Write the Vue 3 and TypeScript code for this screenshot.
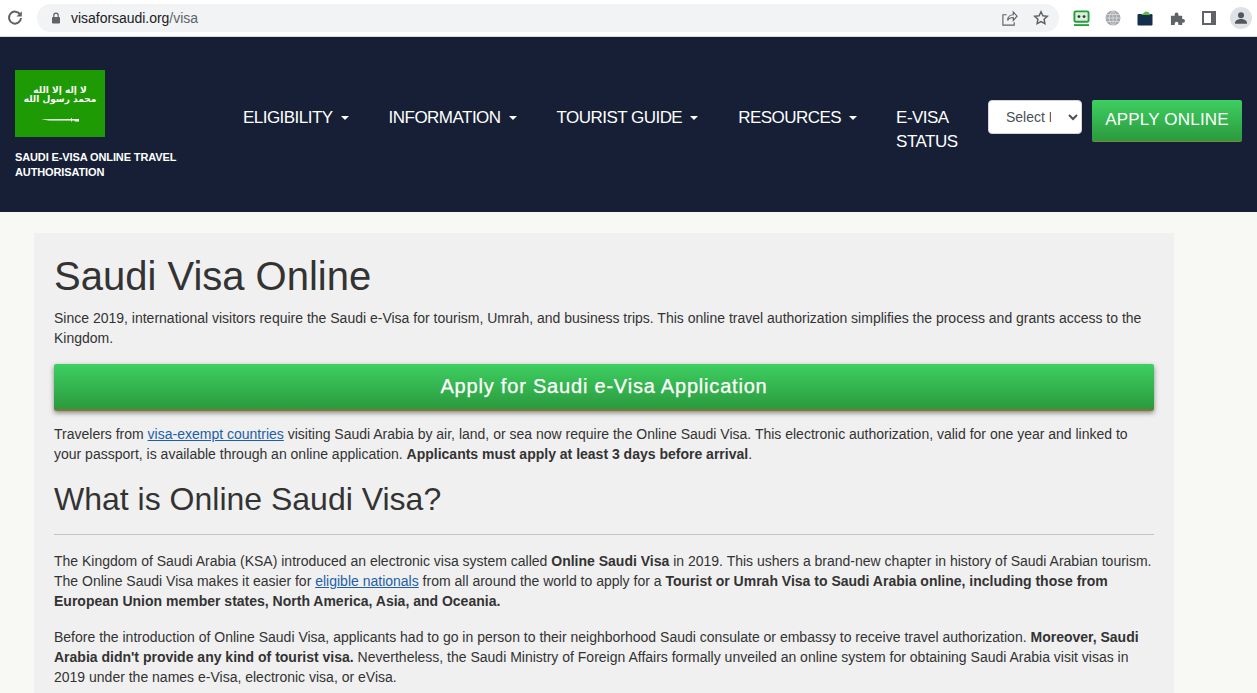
<script setup lang="ts">
const navItems: string[] = ['ELIGIBILITY', 'INFORMATION', 'TOURIST GUIDE', 'RESOURCES']
</script>

<template>
  <div class="page">
    <div class="chrome">
      <svg class="reload" viewBox="0 0 16 16" width="16" height="16">
        <path d="M13.2 4.6A6 6 0 1 0 14 8" fill="none" stroke="#5f6368" stroke-width="2" />
        <path d="M14.8 1.2v5.4H9.4z" fill="#5f6368" />
      </svg>
      <div class="omnibox">
        <svg class="lock" viewBox="0 0 10 12" width="10" height="12">
          <rect x="1" y="5" width="8" height="6.500" rx="1" fill="#5f6368" />
          <path d="M2.800 5V3.400a2.200 2.200 0 0 1 4.400 0V5" fill="none" stroke="#5f6368" stroke-width="1.200" />
        </svg>
        <span class="url">visaforsaudi.org<span class="url-path">/visa</span></span>
        <span class="omni-space"></span>
        <svg class="share" viewBox="0 0 18 18" width="17" height="17">
          <path d="M6 5H2v11h12v-3M7 11c0-4 3-6 6-6V2l4 4.500L13 11V8c-3 0-5 1-6 3z" fill="none" stroke="#5f6368" stroke-width="1.200" />
        </svg>
        <svg class="star" viewBox="0 0 16 16" width="16" height="16">
          <path d="M8 1.800l1.900 4 4.400.5-3.200 3 .8 4.400L8 11.600l-3.900 2.100.8-4.400-3.200-3 4.400-.5z" fill="none" stroke="#5f6368" stroke-width="1.500" />
        </svg>
      </div>
      <div class="extensions">
        <svg class="ext-rf" viewBox="0 0 18 18" width="17" height="17">
          <rect x="1.500" y="1.500" width="15" height="11" rx="1.500" fill="#d9efdc" stroke="#249e3b" stroke-width="2" />
          <circle cx="6.300" cy="7" r="1.500" fill="#333" />
          <circle cx="11.700" cy="7" r="1.500" fill="#333" />
          <rect x="1" y="15" width="16" height="2" fill="#249e3b" />
        </svg>
        <svg class="ext-globe" viewBox="0 0 16 16" width="16" height="16">
          <circle cx="8" cy="8" r="7.500" fill="#a4a7aa" />
          <path d="M.5 8h15M1.500 4.500h13M1.500 11.500h13M8 .5v15M8 .5c-5 4-5 11 0 15M8 .5c5 4 5 11 0 15" fill="none" stroke="#e4e5e6" stroke-width=".7" />
        </svg>
        <svg class="ext-wallet" viewBox="0 0 16 15" width="16" height="15">
          <rect x="0.500" y="3" width="15" height="11.500" rx="1" fill="#14304d" />
          <path d="M4 4L8.500 .5l3 .5 2 3z" fill="#62b84e" />
        </svg>
        <svg class="ext-puzzle" viewBox="0 0 16 16" width="15" height="15">
          <path d="M1 5h4V3.500a2 2 0 0 1 4 0V5h4v3.500h1a2 2 0 0 1 0 4h-1V15H9v-1.500a2 2 0 0 0-4 0V15H1z" fill="#5f6368" />
        </svg>
        <svg class="ext-panel" viewBox="0 0 14 14" width="14" height="14">
          <rect x="1" y="1" width="12" height="12" fill="#fff" stroke="#5f6368" stroke-width="2" />
          <rect x="9" y="1" width="4" height="12" fill="#5f6368" />
        </svg>
        <svg class="avatar" viewBox="0 0 22 22" width="22" height="22">
          <circle cx="11" cy="11" r="11" fill="#dee1e6" />
          <circle cx="11" cy="8.300" r="3" fill="#53575c" />
          <path d="M5 16c0-2.700 3.500-4 6-4s6 1.300 6 4v.8H5z" fill="#53575c" />
        </svg>
      </div>
    </div>

    <header class="site-header">
      <div class="brand">
        <div class="flag">
          <span class="shahada" lang="ar" dir="rtl">لا إله إلا الله<br />محمد رسول الله</span>
          <svg class="sword" viewBox="0 0 38 4" width="38" height="4">
            <path d="M0 1.200L30 1V.3h1V1h7v2.600h-4l-.6-1H31v1h-1V2.400L8 2.500z" fill="#fff" />
          </svg>
        </div>
        <div class="brand-name">SAUDI E-VISA ONLINE TRAVEL AUTHORISATION</div>
      </div>
      <nav class="nav">
        <a v-for="item in navItems" :key="item" class="nav-link">{{ item }}<span class="caret"></span></a>
        <a class="nav-link status">E-VISA STATUS</a>
      </nav>
      <div class="actions">
        <select class="lang" aria-label="Select language">
          <option>Select Language</option>
        </select>
        <a class="apply-top">APPLY ONLINE</a>
      </div>
    </header>

    <main class="content">
      <article class="card">
        <h1>Saudi Visa Online</h1>
        <p class="intro">Since 2019, international visitors require the Saudi e-Visa for tourism, Umrah, and business trips. This online travel authorization simplifies the process and grants access to the Kingdom.</p>
        <a class="apply-wide">Apply for Saudi e-Visa Application</a>
        <p class="after-btn">Travelers from <a class="link">visa-exempt countries</a> visiting Saudi Arabia by air, land, or sea now require the Online Saudi Visa. This electronic authorization, valid for one year and linked to your passport, is available through an online application. <b>Applicants must apply at least 3 days before arrival</b>.</p>
        <h2>What is Online Saudi Visa?</h2>
        <hr />
        <p>The Kingdom of Saudi Arabia (KSA) introduced an electronic visa system called <b>Online Saudi Visa</b> in 2019. This ushers a brand-new chapter in history of Saudi Arabian tourism. The Online Saudi Visa makes it easier for <a class="link">eligible nationals</a> from all around the world to apply for a <b>Tourist or Umrah Visa to Saudi Arabia online, including those from European Union member states, North America, Asia, and Oceania.</b></p>
        <p>Before the introduction of Online Saudi Visa, applicants had to go in person to their neighborhood Saudi consulate or embassy to receive travel authorization. <b>Moreover, Saudi Arabia didn't provide any kind of tourist visa.</b> Nevertheless, the Saudi Ministry of Foreign Affairs formally unveiled an online system for obtaining Saudi Arabia visit visas in 2019 under the names e-Visa, electronic visa, or eVisa.</p>
      </article>
    </main>
  </div>
</template>

<style>
html, body { margin: 0; height: 100%; overflow: hidden; }
</style>

<style scoped>
.page {
  position: relative;
  height: 693px;
  overflow: hidden;
  background: #f8f9f4;
  font-family: "Liberation Sans", Arial, sans-serif;
  color: #333;
}
.chrome {
  height: 36px;
  background: #fff;
  border-bottom: 1px solid #d9dadc;
  display: flex;
  align-items: center;
  padding-left: 7px;
}
.reload { flex: none; }
.omnibox {
  margin-left: 14px;
  width: 1022px;
  height: 28px;
  border-radius: 14px;
  background: #f1f3f4;
  display: flex;
  align-items: center;
  padding: 0 10px 0 14px;
  box-sizing: border-box;
}
.url { margin-left: 10px; font-size: 14px; letter-spacing: -.03px; color: #202124; }
.url-path { color: #5f6368; }
.omni-space { flex: 1; }
.star { margin-left: 15px; }
.extensions {
  display: flex;
  align-items: center;
  margin-left: 14px;
}
.ext-globe { margin-left: 15px; }
.ext-wallet { margin-left: 16px; }
.ext-puzzle { margin-left: 17px; }
.ext-panel { margin-left: 17px; }
.avatar { margin-left: 14px; }
.site-header {
  height: 175px;
  background: #161f36;
  display: flex;
  color: #fff;
}
.brand { width: 205px; padding: 33px 0 0 15px; box-sizing: border-box; flex: none; }
.flag {
  width: 90px;
  height: 67px;
  background: #1d9a04;
  display: flex;
  flex-direction: column;
  align-items: center;
}
.shahada {
  margin-top: 16px;
  height: 18px;
  line-height: 9px;
  font-family: "DejaVu Sans", sans-serif;
  font-size: 9px;
  font-weight: 700;
  white-space: nowrap;
  text-align: center;
  color: #fff;
}
.sword { margin-top: 14px; }
.brand-name {
  margin-top: 13px;
  font-size: 11px;
  letter-spacing: -.12px;
  line-height: 15px;
  font-weight: 700;
  width: 170px;
}
.nav {
  display: flex;
  align-items: flex-start;
  padding-top: 69px;
  margin-left: 38px;
  font-size: 17px;
  letter-spacing: -.53px;
}
.nav-link { line-height: 24px; margin-right: 40px; white-space: nowrap; }
.caret {
  display: inline-block;
  margin-left: 8px;
  vertical-align: 3px;
  border-top: 4px solid #fff;
  border-left: 4px solid transparent;
  border-right: 4px solid transparent;
}
.status { white-space: normal; width: 70px; margin: 0 0 0 -1px; }
.actions {
  position: absolute;
  left: 988px;
  top: 100px;
  display: flex;
  align-items: flex-start;
  gap: 10px;
}
.lang {
  width: 94px;
  height: 34px;
  background: #fff;
  border: 1px solid #ced4da;
  border-radius: 4px;
  padding: 0 14px 0 13px;
  font-family: inherit;
  font-size: 14px;
  color: #495057;
}
.apply-top {
  width: 150px;
  height: 42px;
  line-height: 39px;
  text-align: center;
  font-size: 17px;
  letter-spacing: .2px;
  color: #fff;
  border-radius: 2px;
  background: linear-gradient(#3ecf62, #2b9a3d);
  border-bottom: 1px solid #7d8a33;
  box-sizing: border-box;
}
.content { padding: 21px 0 0 34px; }
.card {
  width: 1140px;
  height: 500px;
  box-sizing: border-box;
  background: #f0f0f0;
  padding: 19px 20px;
  font-size: 14px;
  line-height: 20px;
}
h1 {
  margin: 0 0 8px;
  font-size: 40px;
  line-height: 48px;
  font-weight: 400;
}
h2 {
  margin: 16px 0 0;
  font-size: 32px;
  line-height: 38px;
  font-weight: 400;
}
p { margin: 0 0 16px; }
.intro { margin-bottom: 16px; }
.after-btn { margin: 13px 0 0; }
.apply-wide {
  display: block;
  height: 47px;
  line-height: 44px;
  text-align: center;
  font-size: 20px;
  letter-spacing: .8px;
  -webkit-text-stroke: .25px #fff;
  color: #fff;
  border-radius: 2px;
  background: linear-gradient(#3ecf62, #2b9a3d);
  border-bottom: 2px solid #7d7a33;
  box-shadow: 0 2px 5px rgba(0, 0, 0, .45);
  box-sizing: border-box;
}
hr {
  margin: 16px 0 16px;
  border: 0;
  border-top: 1px solid #c4c4c4;
}
.link { color: #1d5ea8; text-decoration: underline; }
</style>
